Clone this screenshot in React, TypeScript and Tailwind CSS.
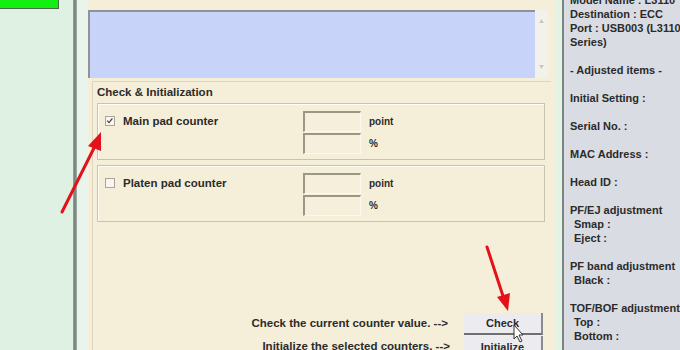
import React from "react";

const rightLines: { text: string; indent?: boolean }[] = [
  { text: "Model Name : L3110" },
  { text: "Destination : ECC" },
  { text: "Port : USB003 (L3110" },
  { text: "Series)" },
  { text: "" },
  { text: "- Adjusted items -" },
  { text: "" },
  { text: "Initial Setting :" },
  { text: "" },
  { text: "Serial No. :" },
  { text: "" },
  { text: "MAC Address :" },
  { text: "" },
  { text: "Head ID :" },
  { text: "" },
  { text: "PF/EJ adjustment" },
  { text: "Smap :", indent: true },
  { text: "Eject :", indent: true },
  { text: "" },
  { text: "PF band adjustment" },
  { text: "Black :", indent: true },
  { text: "" },
  { text: "TOF/BOF adjustment" },
  { text: "Top :", indent: true },
  { text: "Bottom :", indent: true },
];

const SunkenBox = () => (
  <div className="h-[21px] w-[58px] border-l-2 border-t-2 border-l-[#9a9788] border-t-[#9a9788] border-r border-b border-r-[#fbf8ee] border-b-[#fbf8ee] bg-[#f5efdc]" />
);

const CounterGroup = ({ label, checked }: { label: string; checked: boolean }) => (
  <div className="flex h-[57px] shrink-0 border border-[#c9c2ad] shadow-[inset_1px_1px_0_#fffdf5] pl-[7px]">
    <div className="flex w-[198px] items-start pt-[11px]">
      <div className="relative mt-[1px] h-[10px] w-[10px] border border-[#a8a69c] bg-[#f8f6ef]">
        {checked && (
          <svg viewBox="0 0 10 10" className="absolute left-0 top-0 h-[8px] w-[8px]">
            <path d="M1.5 4.5 L3.8 7 L8 1.8" fill="none" stroke="#444" strokeWidth="1.6" />
          </svg>
        )}
      </div>
      <span className="ml-[8px] leading-[12px]">{label}</span>
    </div>
    <div className="flex flex-col gap-[1px] pt-[7px]">
      <div className="flex items-center gap-[8px]">
        <SunkenBox />
        <span className="text-[10px]">point</span>
      </div>
      <div className="flex items-center gap-[8px]">
        <SunkenBox />
        <span className="text-[10px]">%</span>
      </div>
    </div>
  </div>
);

export default function App() {
  return (
    <div
      className="relative flex h-[350px] w-[680px] overflow-hidden bg-[#dff1e3] text-[11px] font-bold text-[#2b2b2b]"
      style={{ fontFamily: '"Liberation Sans", Arial, sans-serif' }}
    >
      {/* left pane */}
      <div className="w-[73px] shrink-0 bg-[#dff1e3]">
        <div className="h-[9px] w-[59px] border-b border-r border-[#4a6a4a] bg-[#12f012]" />
      </div>
      <div className="w-[4px] shrink-0 bg-gradient-to-r from-[#9aa8a0] via-[#6f7c74] to-[#aab6ae]" />
      <div className="w-[11px] shrink-0 bg-[#e9f4ec]" />

      {/* main pane */}
      <div className="flex w-[467px] shrink-0 flex-col bg-[#f5efd9] text-[11.5px]">
        <div className="h-[10px] shrink-0" />
        <div className="flex h-[68px] shrink-0">
          <div className="w-[447px] border-l-2 border-t-2 border-[#8f9296] bg-[#c8d3f9]" />
          <div className="flex w-[13px] flex-col items-center justify-between bg-[#f3f2ea] py-[6px] text-[7px] text-[#c4c4c0]">
            <span>▲</span>
            <span>▼</span>
          </div>
        </div>
        <div className="mx-[4px] mt-[3px] flex shrink-0 flex-col border-l border-t border-[#ddd5bf] pl-[4px] pr-[6px]">
          <div className="pt-[4px] leading-[12px]">Check &amp; Initialization</div>
          <div className="mt-[5px] flex flex-col gap-[5px]">
            <CounterGroup label="Main pad counter" checked />
            <CounterGroup label="Platen pad counter" checked={false} />
          </div>
          <div className="mt-[91px] flex flex-col items-end pr-[2px]">
            <div className="flex items-center">
              <span className="text-[11.5px]">Check the current counter value. --&gt;</span>
              <div className="ml-[16px] flex h-[22px] w-[79px] items-center justify-center border-b-2 border-r-2 border-b-[#6f6f6f] border-r-[#8a8a8a] bg-[#ececf0] text-[11px]">
                Check
              </div>
            </div>
            <div className="mt-[1px] flex items-center">
              <span className="text-[11.5px]">Initialize the selected counters. --&gt;</span>
              <div className="ml-[14px] flex h-[22px] w-[79px] items-center justify-center border-r-2 border-r-[#8a8a8a] bg-[#ececf0] text-[11px]">
                Initialize
              </div>
            </div>
          </div>
        </div>
      </div>

      <div className="w-[7px] shrink-0 bg-[#e3f3e6]" />
      <div className="w-[2px] shrink-0 bg-[#7b8480]" />

      {/* right pane */}
      <div className="flex-1 whitespace-nowrap bg-[#d9dce2] pl-[6px]">
        <div className="-mt-[7px] flex flex-col">
          {rightLines.map((line, index) => (
            <div key={index} className={`h-[14px] leading-[14px] ${line.indent ? "pl-[4px]" : ""}`}>
              {line.text}
            </div>
          ))}
        </div>
      </div>

      {/* annotations */}
      <svg className="pointer-events-none absolute left-0 top-0" width="680" height="350">
        <line x1="62" y1="212" x2="95" y2="146" stroke="#e3121a" strokeWidth="3" strokeLinecap="round" />
        <polygon points="101,132 88,146 101,151" fill="#e3121a" />
        <line x1="487" y1="247" x2="503" y2="296" stroke="#e3121a" strokeWidth="3" strokeLinecap="round" />
        <polygon points="508,311 497,297 510,293" fill="#e3121a" />
        <path
          d="M514 325 L514 339 L517 336 L520 342 L522 341 L519 335 L523 335 Z"
          fill="#ffffff"
          stroke="#333"
          strokeWidth="1"
        />
      </svg>
    </div>
  );
}
